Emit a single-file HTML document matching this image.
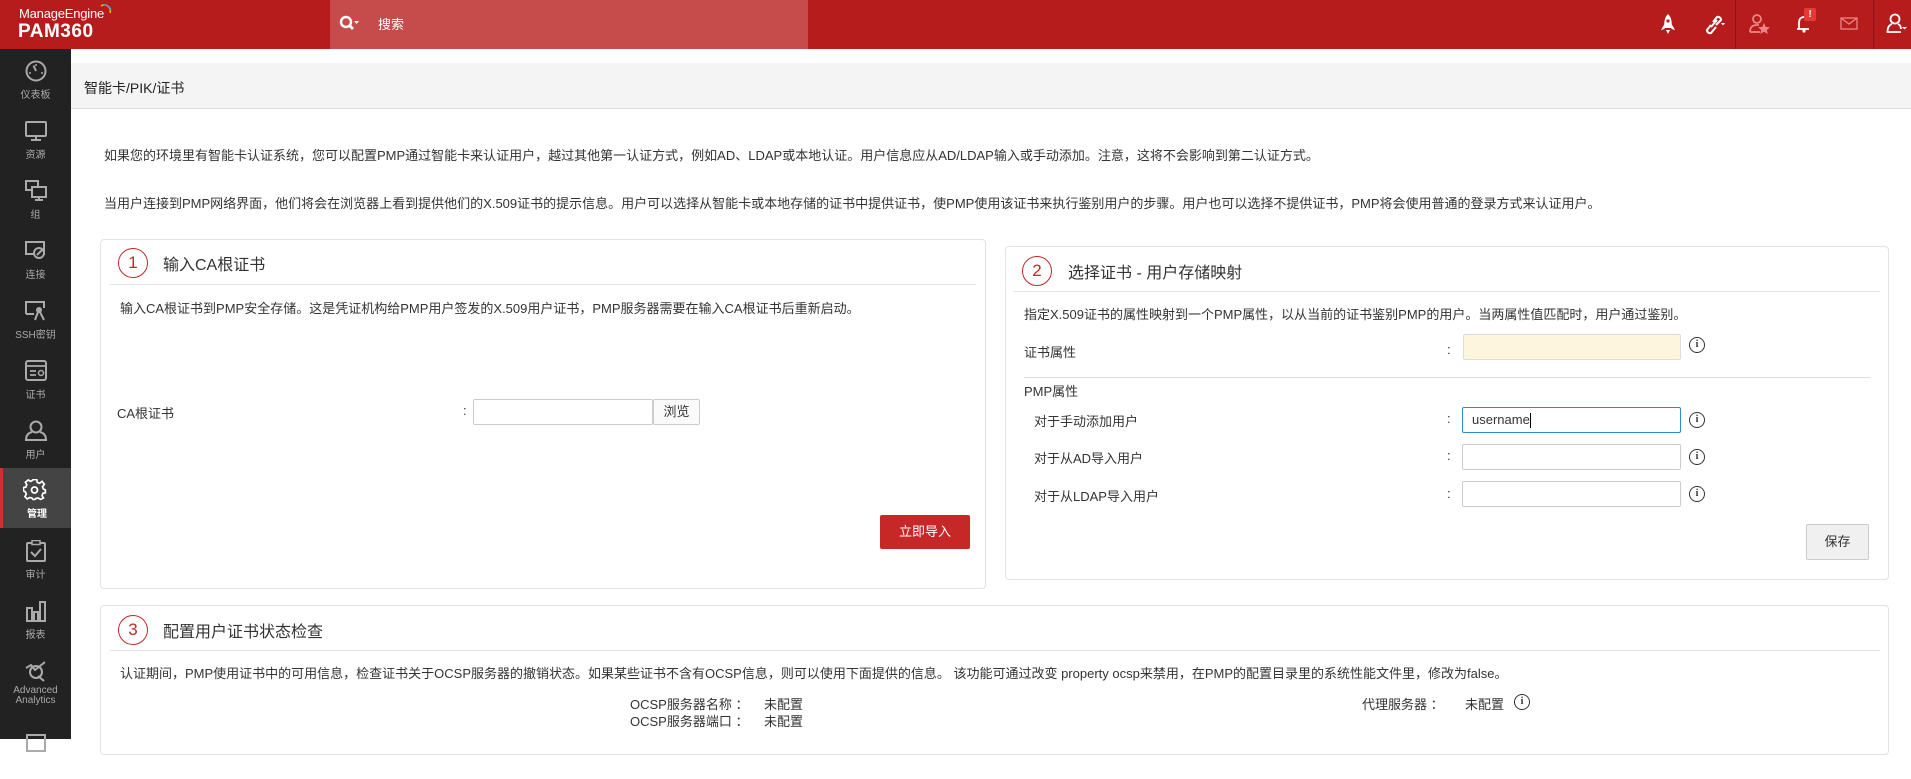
<!DOCTYPE html>
<html><head><meta charset="utf-8">
<style>
*{margin:0;padding:0;box-sizing:border-box}
body{width:1911px;height:739px;overflow:hidden;background:#fff;font-family:"Liberation Sans","Noto Sans CJK SC",sans-serif;color:#333;position:relative;font-size:13px}
.a{position:absolute;white-space:nowrap}
#hdr{position:absolute;left:0;top:0;width:1911px;height:49px;background:#b71c1c}
#search{position:absolute;left:330px;top:0;width:478px;height:49px;background:#c64b4b}
#side{position:absolute;left:0;top:49px;width:71px;height:690px;background:#222}
.si{position:absolute;left:0;width:71px;height:60px;text-align:center;color:#aaa;font-size:10px}
.si svg{display:block;margin:11px auto 4px}
.panel{position:absolute;border:1px solid #e3e3e3;border-radius:4px;background:#fff}
.circ{position:absolute;width:30px;height:30px;border:1.5px solid #c62828;border-radius:50%;text-align:center;line-height:27px;font-size:17px;color:#c62828}
.ptitle{position:absolute;font-size:16px;color:#333}
.hl{position:absolute;height:1px;background:#e3e3e3}
.inp{position:absolute;border:1px solid #ccc;border-radius:2px;background:#fff;height:26px}
.info{position:absolute;width:16px;height:16px;border:1.5px solid #333;border-radius:50%;font:bold 10px "Liberation Serif",serif;text-align:center;line-height:13px;color:#333}
</style></head><body>
<div id="hdr"></div>
<div id="search"></div>
<div class="a" style="left:19px;top:6px;color:#fff;font-size:13px;letter-spacing:-0.2px">ManageEngine</div>
<svg class="a" style="left:98px;top:4px" width="14" height="14" viewBox="0 0 14 14"><path d="M3 2 A6 6 0 0 1 12 9" fill="none" stroke="#f5b800" stroke-width="1.6"/><path d="M5 1 A7 7 0 0 1 13 6" fill="none" stroke="#3aa0d8" stroke-width="1.2"/></svg>
<div class="a" style="left:18px;top:21px;color:#fff;font-size:19px;font-weight:bold;letter-spacing:0.5px">PAM360</div>
<svg class="a" style="left:339px;top:15px" width="22" height="18" viewBox="0 0 22 18"><circle cx="7" cy="7" r="5" fill="none" stroke="#fff" stroke-width="2.4"/><path d="M10.5 10.5 L14 14" stroke="#fff" stroke-width="2.8"/><path d="M15 6 L20 6 L17.5 9Z" fill="#fff"/></svg>
<div class="a" style="left:378px;top:14px;color:#fff;font-size:13px">搜索</div>
<svg class="a" style="left:1660px;top:13px" width="16" height="22" viewBox="0 0 16 22"><path d="M8 1 C4 5 4 10 4.5 15 L11.5 15 C12 10 12 5 8 1Z" fill="#fff"/><path d="M4.5 11 L1 17 L4.5 16Z M11.5 11 L15 17 L11.5 16Z" fill="#fff"/><circle cx="8" cy="8" r="1.6" fill="#b71c1c"/><path d="M6 17 L8 21 L10 17Z" fill="#fff"/></svg>
<svg class="a" style="left:1702px;top:13px" width="24" height="22" viewBox="0 0 24 22"><path d="M9 12 L5 17 A3 3 0 0 0 9 20 L14 14 M11 9 L15 4 A3 3 0 0 1 19 7 L14 12 M9 14 L15 7" fill="none" stroke="#fff" stroke-width="2"/><path d="M19 10 L23 10 L21 12.5Z" fill="#fff"/></svg>
<div class="a" style="left:1735px;top:0;width:1px;height:49px;background:#8c1414"></div>
<svg class="a" style="left:1749px;top:13px" width="22" height="22" viewBox="0 0 22 22"><circle cx="8" cy="6" r="4" fill="none" stroke="#ec8585" stroke-width="1.8"/><path d="M1 19 C1 13 5 12 8 12 L10 12" fill="none" stroke="#ec8585" stroke-width="1.8"/><path d="M1 19 L11 19" stroke="#ec8585" stroke-width="1.8"/><path d="M15 10 L16.8 14 L21 14.3 L17.8 17 L18.8 21 L15 18.8 L11.2 21 L12.2 17 L9 14.3 L13.2 14Z" fill="#ec8585"/></svg>
<svg class="a" style="left:1796px;top:12px" width="16" height="22" viewBox="0 0 16 22"><path d="M3 17 L3 11 C3 7 5 5 8 5 M1 17 L13 17" fill="none" stroke="#fff" stroke-width="1.8"/><circle cx="8" cy="19" r="1.6" fill="#fff"/></svg>
<div class="a" style="left:1804px;top:8px;width:12px;height:13px;background:#e53935;border-radius:2px;color:#fff;font-size:10px;font-weight:bold;text-align:center;line-height:13px">!</div>
<svg class="a" style="left:1840px;top:17px" width="18" height="13" viewBox="0 0 18 13"><rect x="1" y="1" width="16" height="11" fill="none" stroke="#ec8585" stroke-width="1.3"/><path d="M1 1 L9 7 L17 1" fill="none" stroke="#ec8585" stroke-width="1.3"/></svg>
<div class="a" style="left:1873px;top:0;width:1px;height:49px;background:#8c1414"></div>
<svg class="a" style="left:1886px;top:13px" width="22" height="22" viewBox="0 0 22 22"><circle cx="9" cy="6" r="4.5" fill="none" stroke="#fff" stroke-width="1.8"/><path d="M6 11 C3 12 1.5 15 1.5 19 L15 19 M12 11 C14 12 15 14 15 16" fill="none" stroke="#fff" stroke-width="1.8"/><path d="M16 14 L21 14 L18.5 16.5Z" fill="#fff"/></svg>

<div id="side">
 <div class="si" style="top:0"><svg width="24" height="22" viewBox="0 0 24 22"><circle cx="12" cy="11" r="9.5" fill="none" stroke="#aaa" stroke-width="2"/><path d="M12 11 L9.5 5.5" stroke="#aaa" stroke-width="2"/><circle cx="6" cy="13" r="1" fill="#aaa"/><circle cx="18" cy="13" r="1" fill="#aaa"/><circle cx="12" cy="5" r="1" fill="#aaa"/></svg>仪表板</div>
 <div class="si" style="top:60px"><svg width="24" height="22" viewBox="0 0 24 22"><rect x="2" y="2" width="20" height="14" rx="1" fill="none" stroke="#aaa" stroke-width="2"/><path d="M12 16 L12 19 M7 20 L17 20" stroke="#aaa" stroke-width="2"/></svg>资源</div>
 <div class="si" style="top:120px"><svg width="24" height="22" viewBox="0 0 24 22"><rect x="2" y="1" width="12" height="9" fill="none" stroke="#aaa" stroke-width="2"/><rect x="8" y="7" width="14" height="10" fill="#222" stroke="#aaa" stroke-width="2"/><path d="M15 17 L15 20 M11 20 L19 20" stroke="#aaa" stroke-width="2"/></svg>组</div>
 <div class="si" style="top:180px"><svg width="24" height="22" viewBox="0 0 24 22"><rect x="2" y="2" width="18" height="12" fill="none" stroke="#aaa" stroke-width="2"/><circle cx="15" cy="13" r="5" fill="#222" stroke="#aaa" stroke-width="2"/><path d="M13 15 L18 10" stroke="#aaa" stroke-width="2"/></svg>连接</div>
 <div class="si" style="top:240px"><svg width="24" height="22" viewBox="0 0 24 22"><path d="M2 14 L2 2 L20 2 L20 8 M2 14 L10 14" fill="none" stroke="#aaa" stroke-width="2"/><circle cx="15" cy="10" r="3" fill="#aaa"/><path d="M14 12 L11 20 M16 12 L20 20" stroke="#aaa" stroke-width="2"/></svg>SSH密钥</div>
 <div class="si" style="top:300px"><svg width="24" height="22" viewBox="0 0 24 22"><rect x="2" y="1" width="20" height="19" rx="2" fill="none" stroke="#aaa" stroke-width="2"/><path d="M2 6 L22 6 M6 11 L12 11 M6 15 L12 15" stroke="#aaa" stroke-width="1.8"/><circle cx="17" cy="13" r="2.5" fill="none" stroke="#aaa" stroke-width="1.5"/></svg>证书</div>
 <div class="si" style="top:360px"><svg width="24" height="22" viewBox="0 0 24 22"><circle cx="12" cy="7" r="5.5" fill="none" stroke="#aaa" stroke-width="2"/><path d="M8 12 C4 13 2 16 2 20 L22 20 C22 16 20 13 16 12" fill="none" stroke="#aaa" stroke-width="2"/></svg>用户</div>
 <div class="si" style="top:419px;background:#444;color:#fff;font-weight:bold;border-left:3px solid #d32f2f"><svg width="24" height="22" viewBox="0 0 24 22" style="margin-left:20px"><path d="M10 1 L14 1 L14.5 4 L17 5 L19.5 3 L22 6 L20 8.5 L21 11 L23 12 L23 15 L20.5 15.5 L19.5 18 L21 20.5 L18 22 L15.5 20.5 L13 21 L12 22 L10 22 L9 20.5 L6.5 20 L4 21.5 L1.5 19 L3 16.5 L2 14 L0 13 L0 9.5 L2.5 9 L3.5 6.5 L2 4 L5 1.5 L7.5 3 L9.5 2Z" fill="none" stroke="#fff" stroke-width="1.8" transform="scale(0.95) translate(0.5,-0.5)"/><circle cx="11.5" cy="11" r="3" fill="none" stroke="#fff" stroke-width="1.8"/></svg>管理</div>
 <div class="si" style="top:480px"><svg width="24" height="22" viewBox="0 0 24 22"><rect x="3" y="3" width="18" height="18" rx="1" fill="none" stroke="#aaa" stroke-width="2"/><rect x="8" y="0.5" width="8" height="4" fill="#222" stroke="#aaa" stroke-width="1.5"/><path d="M7 12 L11 16 L17 9" fill="none" stroke="#aaa" stroke-width="2"/></svg>审计</div>
 <div class="si" style="top:540px"><svg width="24" height="22" viewBox="0 0 24 22"><rect x="3" y="8" width="5" height="13" fill="none" stroke="#aaa" stroke-width="2"/><rect x="10" y="12" width="4" height="9" fill="none" stroke="#aaa" stroke-width="2"/><rect x="16" y="2" width="5" height="19" fill="none" stroke="#aaa" stroke-width="2"/></svg>报表</div>
 <div class="si" style="top:600px;line-height:10px"><svg width="24" height="22" viewBox="0 0 24 22"><circle cx="12" cy="12" r="6" fill="none" stroke="#aaa" stroke-width="2"/><path d="M2 8 L7 5 L11 10 L21 2 M14 16 L20 21" fill="none" stroke="#aaa" stroke-width="2"/></svg>Advanced<br>Analytics</div>
 <div class="si" style="top:670px"><svg width="24" height="22" viewBox="0 0 24 22"><rect x="3" y="5" width="18" height="16" fill="none" stroke="#aaa" stroke-width="2"/></svg></div>
</div>

<div class="a" style="left:71px;top:63px;width:1840px;height:46px;background:#f4f4f4;border-bottom:1px solid #ddd"></div>
<div class="a" style="left:84px;top:78px;font-size:14px;color:#222">智能卡/PIK/证书</div>

<div class="a" style="left:104px;top:145px">如果您的环境里有智能卡认证系统，您可以配置PMP通过智能卡来认证用户，越过其他第一认证方式，例如AD、LDAP或本地认证。用户信息应从AD/LDAP输入或手动添加。注意，这将不会影响到第二认证方式。</div>
<div class="a" style="left:104px;top:193px">当用户连接到PMP网络界面，他们将会在浏览器上看到提供他们的X.509证书的提示信息。用户可以选择从智能卡或本地存储的证书中提供证书，使PMP使用该证书来执行鉴别用户的步骤。用户也可以选择不提供证书，PMP将会使用普通的登录方式来认证用户。</div>

<div class="panel" style="left:100px;top:239px;width:886px;height:350px"></div>
<div class="circ" style="left:118px;top:248px">1</div>
<div class="ptitle" style="left:163px;top:251px">输入CA根证书</div>
<div class="hl" style="left:110px;top:284px;width:866px"></div>
<div class="a" style="left:120px;top:298px">输入CA根证书到PMP安全存储。这是凭证机构给PMP用户签发的X.509用户证书，PMP服务器需要在输入CA根证书后重新启动。</div>
<div class="a" style="left:117px;top:403px">CA根证书</div>
<div class="a" style="left:463px;top:403px">:</div>
<div class="inp" style="left:473px;top:399px;width:180px"></div>
<div class="inp" style="left:653px;top:399px;width:47px;text-align:center;line-height:24px;background:#fafafa">浏览</div>
<div class="a" style="left:880px;top:515px;width:90px;height:34px;background:#c62828;border-radius:2px;color:#fff;text-align:center;line-height:34px;font-size:13px">立即导入</div>

<div class="panel" style="left:1005px;top:246px;width:884px;height:334px"></div>
<div class="circ" style="left:1022px;top:256px">2</div>
<div class="ptitle" style="left:1068px;top:259px">选择证书 - 用户存储映射</div>
<div class="hl" style="left:1014px;top:291px;width:866px"></div>
<div class="a" style="left:1024px;top:304px">指定X.509证书的属性映射到一个PMP属性，以从当前的证书鉴别PMP的用户。当两属性值匹配时，用户通过鉴别。</div>
<div class="a" style="left:1024px;top:342px">证书属性</div>
<div class="a" style="left:1447px;top:342px">:</div>
<div class="inp" style="left:1463px;top:334px;width:218px;background:#fdf6dd;border-color:#ddd"></div>
<div class="info" style="left:1689px;top:337px">i</div>
<div class="hl" style="left:1024px;top:377px;width:846px;background:#ddd"></div>
<div class="a" style="left:1024px;top:381px">PMP属性</div>
<div class="a" style="left:1034px;top:411px">对于手动添加用户</div>
<div class="a" style="left:1447px;top:411px">:</div>
<div class="inp" style="left:1462px;top:407px;width:219px;border-color:#2a8bd6;padding-left:9px;line-height:24px;font-size:13px;color:#333">username<span style="display:inline-block;width:1px;height:15px;background:#000;vertical-align:middle"></span></div>
<div class="info" style="left:1689px;top:412px">i</div>
<div class="a" style="left:1034px;top:448px">对于从AD导入用户</div>
<div class="a" style="left:1447px;top:448px">:</div>
<div class="inp" style="left:1462px;top:444px;width:219px"></div>
<div class="info" style="left:1689px;top:449px">i</div>
<div class="a" style="left:1034px;top:486px">对于从LDAP导入用户</div>
<div class="a" style="left:1447px;top:486px">:</div>
<div class="inp" style="left:1462px;top:481px;width:219px"></div>
<div class="info" style="left:1689px;top:486px">i</div>
<div class="a" style="left:1806px;top:524px;width:63px;height:36px;background:#f0f0f0;border:1px solid #ccc;border-radius:2px;text-align:center;line-height:34px">保存</div>

<div class="panel" style="left:100px;top:605px;width:1789px;height:150px"></div>
<div class="circ" style="left:118px;top:615px">3</div>
<div class="ptitle" style="left:163px;top:618px">配置用户证书状态检查</div>
<div class="hl" style="left:110px;top:650px;width:1770px"></div>
<div class="a" style="left:120px;top:663px">认证期间，PMP使用证书中的可用信息，检查证书关于OCSP服务器的撤销状态。如果某些证书不含有OCSP信息，则可以使用下面提供的信息。 该功能可通过改变 property ocsp来禁用，在PMP的配置目录里的系统性能文件里，修改为false。</div>
<div class="a" style="left:630px;top:694px">OCSP服务器名称 ：</div>
<div class="a" style="left:764px;top:694px">未配置</div>
<div class="a" style="left:630px;top:711px">OCSP服务器端口 ：</div>
<div class="a" style="left:764px;top:711px">未配置</div>
<div class="a" style="left:1362px;top:694px">代理服务器 ：</div>
<div class="a" style="left:1465px;top:694px">未配置</div>
<div class="info" style="left:1514px;top:694px">i</div>
</body></html>
